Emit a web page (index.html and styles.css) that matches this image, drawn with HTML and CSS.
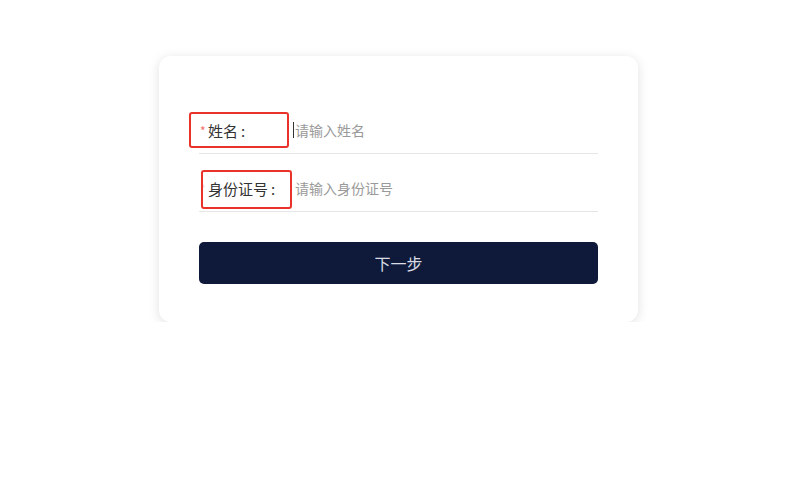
FILE: index.html
```html
<!DOCTYPE html>
<html lang="zh">
<head>
<meta charset="utf-8">
<title>表单</title>
<link rel="stylesheet" href="styles.css">
</head>
<body>
<div class="page">
  <div class="card">
    <div class="row">
      <label class="label"><span class="star">*</span>姓名<span class="colon">:</span></label>
      <span class="field"><span class="caret"></span><input class="input" type="text" placeholder="请输入姓名"></span>
      <span class="mark mark-name"></span>
    </div>
    <div class="row">
      <label class="label"><span class="star star-faint">*</span>身份证号<span class="colon">:</span></label>
      <span class="field"><input class="input" type="text" placeholder="请输入身份证号"></span>
      <span class="mark mark-id"></span>
    </div>
    <button class="btn" type="button">下一步</button>
  </div>
</div>
</body>
</html>
```
FILE: styles.css
```css
html, body {
  margin: 0;
  padding: 0;
  background: #ffffff;
}
body {
  font-family: "Noto Sans CJK SC", "Noto Sans", sans-serif;
}
.page {
  padding: 56px 0 0 159px;
}
.card {
  width: 479px;
  box-sizing: border-box;
  padding: 54px 40px 38px;
  background: #fff;
  border-radius: 12px;
  box-shadow: 0 2px 12px rgba(0, 0, 0, 0.12);
  display: flex;
  flex-direction: column;
}
.row {
  position: relative;
  height: 44px;
  box-sizing: border-box;
  padding-bottom: 3px;
  border-bottom: 1px solid #e6e6e6;
  display: flex;
  align-items: center;
}
.row + .row {
  margin-top: 14px;
}
.label {
  width: 95px;
  flex: none;
  font-size: 15px;
  color: #333;
  display: flex;
  align-items: center;
}
.colon {
  margin-left: 3px;
}
.star {
  width: 9px;
  color: #f56c6c;
  font-size: 12px;
  padding-left: 1px;
  box-sizing: border-box;
}
.star-faint {
  color: #f9d4d4;
}
.field {
  flex: 1;
  display: flex;
  align-items: center;
  position: relative;
}
.caret {
  width: 1px;
  height: 16px;
  background: #333;
  position: absolute;
  left: -1px;
  top: 50%;
  margin-top: -8px;
}
.input {
  border: none;
  outline: none;
  padding: 0 0 0 1px;
  margin: 0;
  width: 100%;
  font-family: inherit;
  font-size: 14px;
  color: #333;
  background: transparent;
  caret-color: transparent;
}
.input::placeholder {
  color: #9a9a9a;
}
.mark {
  position: absolute;
  border: 2px solid #e8322a;
  border-radius: 3px;
  box-sizing: border-box;
  pointer-events: none;
}
.mark-name {
  left: -10px;
  top: 2px;
  width: 100px;
  height: 36px;
}
.mark-id {
  left: 2px;
  top: 2px;
  width: 91px;
  height: 39px;
}
.btn {
  margin-top: 30px;
  height: 42px;
  border: none;
  border-radius: 5px;
  background: #0f1a3a;
  color: #d9dce4;
  font-family: inherit;
  font-size: 16px;
  cursor: pointer;
}
```
